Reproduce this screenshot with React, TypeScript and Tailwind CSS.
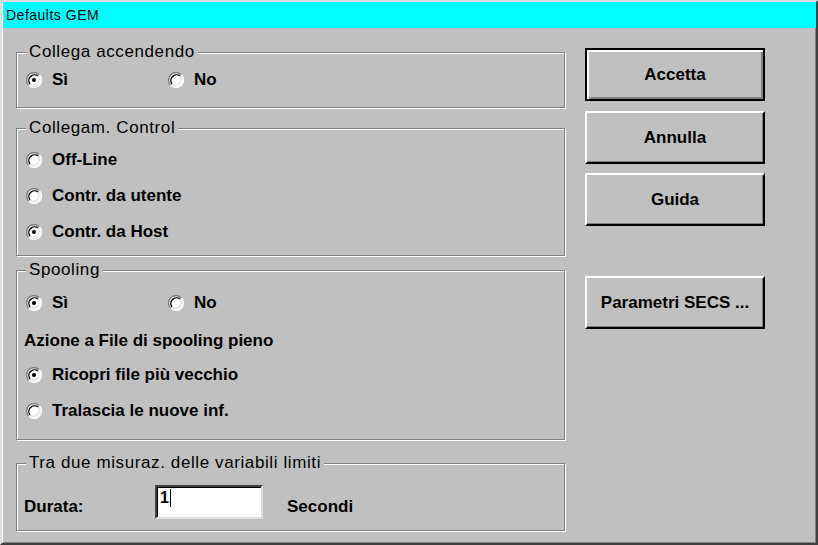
import type { ReactNode } from 'react';

const font = "font-['Liberation_Sans',Arial,sans-serif]";

function Radio({ checked }: { checked?: boolean }) {
  return (
    <svg width="16" height="16" viewBox="0 0 14 14" className="shrink-0">
      <circle cx="7" cy="7" r="6" fill="#fff" />
      <path d="M11.6 2.4 A6.5 6.5 0 0 0 2.4 11.6" stroke="#808080" strokeWidth="1.2" fill="none" />
      <path d="M2.4 11.6 A6.5 6.5 0 0 0 11.6 2.4" stroke="#fff" strokeWidth="1.2" fill="none" />
      <path d="M10.5 3.5 A5 5 0 0 0 3.5 10.5" stroke="#000" strokeWidth="1.2" fill="none" />
      <path d="M3.5 10.5 A5 5 0 0 0 10.5 3.5" stroke="#dfdfdf" strokeWidth="1.2" fill="none" />
      {checked ? <circle cx="7" cy="7" r="1.8" fill="#000" /> : null}
    </svg>
  );
}

function Option({ label, checked, className = '' }: { label: string; checked?: boolean; className?: string }) {
  return (
    <div className={`flex h-[20px] items-center gap-[10px] ${className}`}>
      <Radio checked={checked} />
      <span className="text-[17px] font-bold text-black">{label}</span>
    </div>
  );
}

function Group({ title, className, children }: { title: string; className: string; children: ReactNode }) {
  return (
    <div
      className={`relative w-[549px] border border-[#808080] shadow-[inset_1px_1px_0_#fff,1px_1px_0_#fff] ${className}`}
    >
      <span className="absolute -top-[11px] left-[9px] bg-[#c0c0c0] px-[3px] text-[17px] leading-[20px] tracking-[0.6px] text-black">
        {title}
      </span>
      {children}
    </div>
  );
}

function Button({ label, primary, className = '' }: { label: string; primary?: boolean; className?: string }) {
  const bevel = primary
    ? 'border-2 border-black shadow-[inset_2px_2px_0_#fff,inset_-2px_-2px_0_#808080]'
    : 'border-t-2 border-l-2 border-r-2 border-b-2 border-t-white border-l-white border-r-black border-b-black shadow-[inset_-1px_-1px_0_#808080]';
  return (
    <div className={`flex h-[53px] w-[180px] items-center justify-center bg-[#c0c0c0] ${bevel} ${className}`}>
      <span className="text-[17px] font-bold text-black">{label}</span>
    </div>
  );
}

export default function App() {
  return (
    <div
      className={`h-[545px] w-[818px] border-2 border-t-[#dfdfdf] border-l-[#dfdfdf] border-r-[#404040] border-b-[#404040] bg-[#c0c0c0] shadow-[inset_1px_1px_0_#fff,inset_-1px_-1px_0_#808080] ${font}`}
    >
      <div className="ml-px flex h-[26px] w-[813px] items-center bg-[#00ffff] pl-[3px] text-[14px] tracking-[0.5px] text-black">
        Defaults GEM
      </div>

      <div className="flex pl-[14px]">
        <div className="flex flex-col">
          <Group title="Collega accendendo" className="mt-[24px] h-[56px] pl-[9px] pt-[17px]">
            <div className="flex">
              <Option label="Sì" checked className="w-[142px]" />
              <Option label="No" />
            </div>
          </Group>

          <Group title="Collegam. Control" className="mt-[20px] flex h-[128px] flex-col gap-[16px] pl-[9px] pt-[21px]">
            <Option label="Off-Line" />
            <Option label="Contr. da utente" />
            <Option label="Contr. da Host" checked />
          </Group>

          <Group title="Spooling" className="mt-[14px] h-[170px] pl-[9px] pt-[22px]">
            <div className="flex">
              <Option label="Sì" checked className="w-[142px]" />
              <Option label="No" />
            </div>
            <div className="-ml-[2px] mt-[18px] flex h-[20px] items-center text-[17px] font-bold text-black">
              Azione a File di spooling pieno
            </div>
            <Option label="Ricopri file più vecchio" checked className="mt-[14px]" />
            <Option label="Tralascia le nuove inf." className="mt-[16px]" />
          </Group>

          <Group title="Tra due misuraz. delle variabili limiti" className="mt-[23px] h-[68px] pl-[7px] pt-[21px]">
            <div className="flex items-start">
              <span className="mt-[9px] w-[131px] text-[17px] font-bold text-black">Durata:</span>
              <div className="flex h-[34px] w-[108px] items-start border-2 border-t-[#404040] border-l-[#404040] border-r-[#dfdfdf] border-b-[#dfdfdf] bg-white pl-[3px] pt-px shadow-[inset_1px_1px_0_#000]">
                <span className="text-[16px] font-bold leading-[20px] text-black">1</span>
                <span className="ml-px mt-px h-[18px] w-px bg-black" />
              </div>
              <span className="ml-[24px] mt-[9px] text-[17px] font-bold text-black">Secondi</span>
            </div>
          </Group>
        </div>

        <div className="ml-[20px] flex flex-col">
          <Button label="Accetta" primary className="mt-[20px]" />
          <Button label="Annulla" className="mt-[10px]" />
          <Button label="Guida" className="mt-[9px]" />
          <Button label="Parametri SECS ..." className="mt-[50px]" />
        </div>
      </div>
    </div>
  );
}
